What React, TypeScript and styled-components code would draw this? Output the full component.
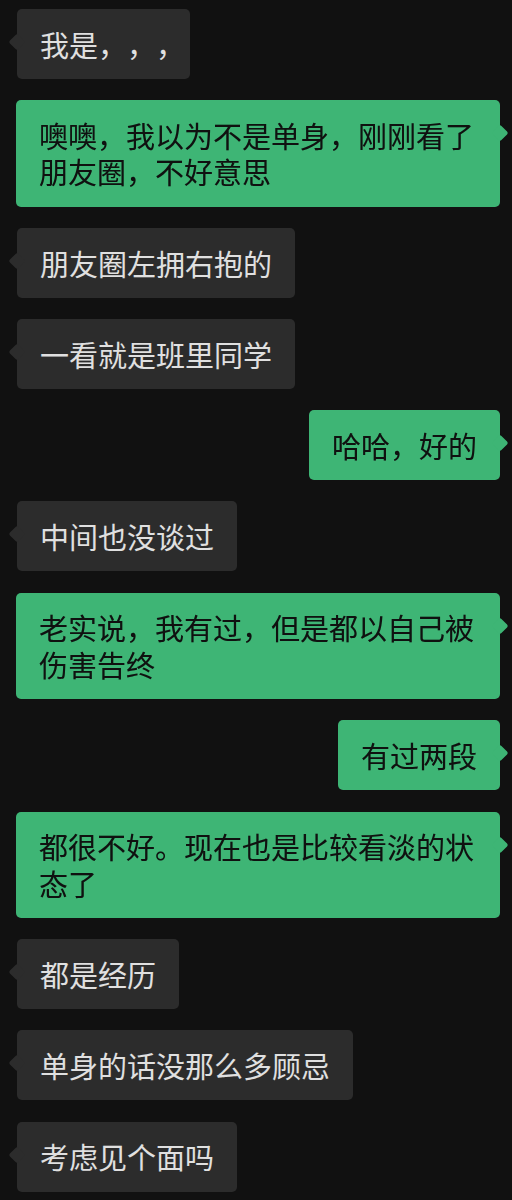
import * as React from 'react';
import styled, {createGlobalStyle} from 'styled-components';

type Side = 'left' | 'right';

interface IMessage {
    side: Side;
    text: string;
    tight?: boolean;
}

const messages: IMessage[] = [
    {side: 'left', text: '我是，，，', tight: true},
    {side: 'right', text: '噢噢，我以为不是单身，刚刚看了朋友圈，不好意思'},
    {side: 'left', text: '朋友圈左拥右抱的'},
    {side: 'left', text: '一看就是班里同学'},
    {side: 'right', text: '哈哈，好的'},
    {side: 'left', text: '中间也没谈过'},
    {side: 'right', text: '老实说，我有过，但是都以自己被伤害告终'},
    {side: 'right', text: '有过两段'},
    {side: 'right', text: '都很不好。现在也是比较看淡的状态了'},
    {side: 'left', text: '都是经历'},
    {side: 'left', text: '单身的话没那么多顾忌'},
    {side: 'left', text: '考虑见个面吗'},
];

const GlobalStyle = createGlobalStyle`
    html, body {
        margin: 0;
        padding: 0;
        background: #111111;
    }
`;

const Chat = styled.div`
    display: flex;
    flex-direction: column;
    gap: 21.2px;
    width: 512px;
    height: 1200px;
    overflow: hidden;
    box-sizing: border-box;
    padding: 9px 12px 0 17px;
    background: #111111;
    font-family: "Noto Sans CJK SC", "Noto Sans", sans-serif;
`;

const Row = styled.div<{$side: Side}>`
    display: flex;
    justify-content: ${p => p.$side === 'right' ? 'flex-end' : 'flex-start'};
    margin-left: ${p => p.$side === 'right' ? '-1px' : '0'};
`;

const Bubble = styled.div<{$side: Side; $tight?: boolean}>`
    position: relative;
    max-width: 484px;
    box-sizing: border-box;
    padding: 16.75px ${p => p.$tight ? '5px' : '23px'} 16.75px 23px;
    border-radius: 5px;
    background: ${p => p.$side === 'right' ? '#3eb575' : '#2c2c2c'};
    font-size: 29px;
    line-height: 36.5px;
    text-spacing-trim: space-all;
    word-break: break-all;

    &::before {
        content: '';
        position: absolute;
        top: 27px;
        ${p => p.$side === 'right' ? 'right: -6px;' : 'left: -6px;'}
        width: 12px;
        height: 12px;
        border-radius: 2px;
        background: inherit;
        transform: rotate(45deg);
    }
`;

// light glyphs darkened after paint, so the text ends up near black
const SentText = styled.div`
    color: #d8f0e0;
    filter: brightness(0.07);
`;

const ReceivedText = styled.div`
    color: #e0e0e0;
`;

export default function App() {
    return (
        <>
            <GlobalStyle />
            <Chat>
                {messages.map((m, i) => (
                    <Row key={i} $side={m.side}>
                        <Bubble $side={m.side} $tight={m.tight}>
                            {m.side === 'right'
                                ? <SentText>{m.text}</SentText>
                                : <ReceivedText>{m.text}</ReceivedText>}
                        </Bubble>
                    </Row>
                ))}
            </Chat>
        </>
    );
}
